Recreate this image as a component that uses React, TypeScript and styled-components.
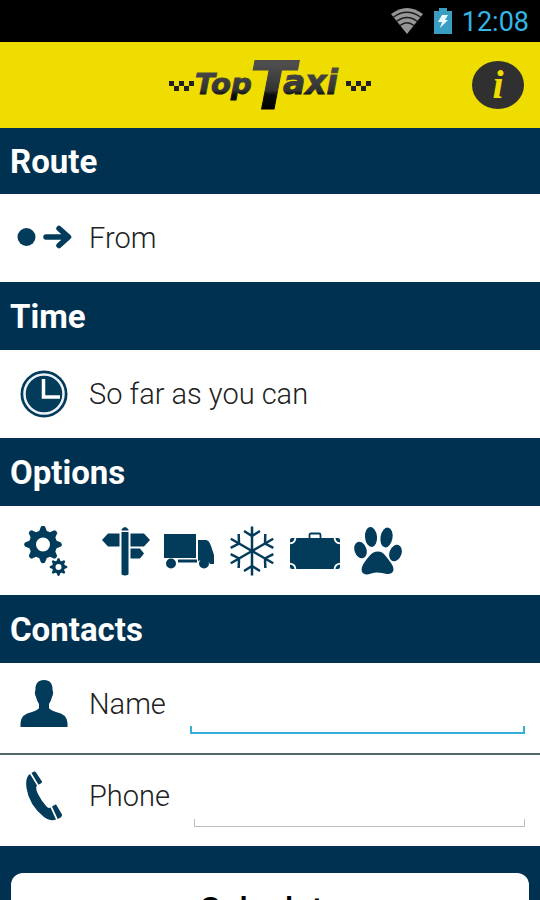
import React from "react";
import styled, { createGlobalStyle } from "styled-components";

const navy = "#013150";
const ink = "#033b5b";
const yellow = "#efdd00";
const holo = "#33b5e5";

const GlobalStyle = createGlobalStyle`
  *, *::before, *::after { box-sizing: border-box; }
  body { margin: 0; background: ${navy}; font-family: Roboto, "Noto Sans", sans-serif; }
`;

const Screen = styled.div`
  display: flex;
  flex-direction: column;
  height: 100vh;
  background: ${navy};
`;

const StatusBar = styled.div`
  flex: none;
  display: flex;
  align-items: center;
  justify-content: flex-end;
  gap: 10px;
  height: 42px;
  padding: 0 11px 0 0;
  background: #000;
`;

const Clock = styled.time`
  color: ${holo};
  font-size: 27px;
  line-height: 32px;
  margin-top: 2px;
`;

const TitleBar = styled.header`
  flex: none;
  display: grid;
  grid-template-columns: 1fr auto 1fr;
  align-items: center;
  height: 86px;
  padding: 0 16px;
  background: ${yellow};
`;

const Brand = styled.h1`
  grid-column: 2;
  margin: 0;
  line-height: 0;
`;

const InfoButton = styled.button`
  justify-self: end;
  display: flex;
  align-items: center;
  justify-content: center;
  width: 52px;
  height: 48px;
  padding: 0;
  border: 0;
  border-radius: 50%;
  background: #303030;
  color: ${yellow};
  font: italic bold 40px/44px "Liberation Serif", serif;
`;

const Content = styled.main`
  flex: 1;
  min-height: 0;
  overflow-y: auto;
  scrollbar-width: none;
`;

const SectionTitle = styled.h2`
  display: flex;
  align-items: center;
  height: 68px;
  margin: 0;
  padding: 2px 10px 0;
  background: ${navy};
  color: #fff;
  font-size: 33px;
  font-weight: 700;
  line-height: 40px;
  &:first-child {
    height: 66px;
  }
`;

const Row = styled.div`
  display: flex;
  align-items: center;
  height: 89px;
  padding: 0 15px;
  background: #fff;
`;

const RowButton = styled.button`
  display: flex;
  align-items: center;
  width: 100%;
  height: 88px;
  padding: 0 15px;
  border: 0;
  background: #fff;
  text-align: left;
`;

const FieldRow = styled(Row)`
  height: 90px;
  padding-bottom: 9px;
  & + & {
    height: 93px;
    border-top: 2px solid #56666f;
  }
`;

const IconSlot = styled.span`
  flex: none;
  display: flex;
  justify-content: center;
  width: 58px;
  margin-right: 16px;
`;

const rowText = `
  color: #222;
  font: 300 29px/36px Roboto, "Noto Sans", sans-serif;
`;

const RowText = styled.span`
  ${rowText}
`;

const FieldLabel = styled.label`
  ${rowText}
  flex: none;
`;

const Field = styled.input<{ $line: string; $weight: number }>`
  flex: 1;
  min-width: 0;
  height: 56px;
  margin: 0 0 10px 24px;
  padding: 8px 10px;
  border: 0;
  outline: 0;
  align-self: flex-end;
  color: #222;
  font: 300 29px/36px Roboto, sans-serif;
  background:
    linear-gradient(${p => p.$line}, ${p => p.$line}) left bottom / 100% ${p => p.$weight}px no-repeat,
    linear-gradient(${p => p.$line}, ${p => p.$line}) left bottom / ${p => p.$weight}px 8px no-repeat,
    linear-gradient(${p => p.$line}, ${p => p.$line}) right bottom / ${p => p.$weight}px 8px no-repeat;
`;

const OptionButton = styled.button`
  flex: none;
  display: flex;
  justify-content: center;
  width: 63px;
  padding: 0;
  border: 0;
  background: none;
`;

const OptionList = styled.div`
  display: flex;
  align-items: center;
  margin-left: 16px;
`;

const Footer = styled.div`
  display: flex;
  padding: 27px 11px;
  background: ${navy};
`;

const CalculateButton = styled.button`
  flex: 1;
  height: 72px;
  border: 0;
  border-radius: 12px;
  background: #fff;
  color: #000;
  font: 500 34px/40px Roboto, "Noto Sans", sans-serif;
`;

const WifiIcon = () => (
  <svg width="34" height="28" viewBox="0 0 34 28" aria-hidden="true">
    <path d="M1 7Q17-5 33 7L17 27Z" fill="#969696" />
    <path d="M3 10.500Q17 0 31 10.500M6.500 14.500Q17 6.500 27.500 14.500M10 18.500Q17 13 24 18.500" fill="none" stroke="#1c1c1c" strokeWidth="1.500" />
  </svg>
);

const BatteryIcon = () => (
  <svg width="18" height="28" viewBox="0 0 18 28" aria-hidden="true">
    <path d="M5 1h8v3h5v23H0V4h5z" fill="#3a9dc2" />
    <path d="M8 8h6l-3 5h3L6 21l2-6H4z" fill="#e9fbff" />
  </svg>
);

const Checks = ({ x }: { x: number }) => (
  <path
    transform={`translate(${x} 26)`}
    d="M0 0h5v5H0zM10 0h5v5h-5zM20 0h5v5h-5zM5 5h5v5H5zM15 5h5v5h-5z"
    fill="#222"
  />
);

const Logo = () => (
  <svg width="204" height="60" viewBox="0 0 204 60" role="img" aria-label="TopTaxi">
    <defs>
      <linearGradient id="metal" x1="0" y1="10" x2="0" y2="56" gradientUnits="userSpaceOnUse">
        <stop offset="0" stopColor="#4d4d4d" />
        <stop offset=".55" stopColor="#333" />
        <stop offset=".65" stopColor="#0c0c0c" />
        <stop offset="1" stopColor="#000" />
      </linearGradient>
    </defs>
    <Checks x={1} />
    <g
      fill="url(#metal)"
      stroke="url(#metal)"
      strokeWidth="1"
      fontFamily="DejaVu Sans, sans-serif"
      fontWeight="700"
      fontStyle="italic"
    >
      <text x="27" y="39" fontSize="29">Top</text>
      <text x="82" y="54" fontSize="66">T</text>
      <text x="115" y="39" fontSize="33">axi</text>
    </g>
    <Checks x={178} />
  </svg>
);

const FromIcon = () => (
  <svg width="56" height="26" viewBox="0 0 56 26" aria-hidden="true">
    <circle cx="10.500" cy="12" r="9" fill={ink} />
    <path d="M30 12h22M43 3.500l9.500 8.500-9.500 8.500" fill="none" stroke={ink} strokeWidth="5.500" strokeLinecap="round" strokeLinejoin="round" />
  </svg>
);

const ClockIcon = () => (
  <svg width="48" height="48" viewBox="0 0 48 48" aria-hidden="true">
    <circle cx="24" cy="24" r="23.500" fill={ink} />
    <circle cx="24" cy="24" r="19.500" fill="none" stroke="#eef3fa" strokeWidth="2.500" />
    <path d="M23.500 9v18H40" fill="none" stroke="#fff" strokeWidth="3.500" />
  </svg>
);

const Gear = ({ cx, cy, r, hole, tooth }: { cx: number; cy: number; r: number; hole: number; tooth: number }) => (
  <g transform={`translate(${cx} ${cy})`}>
    <circle r={(r + hole) / 2} fill="none" stroke={ink} strokeWidth={r - hole} />
    {[0, 45, 90, 135, 180, 225, 270, 315].map(a => (
      <path
        key={a}
        transform={`rotate(${a})`}
        d={`M${-tooth} ${-r + 1}L${-tooth / 2} ${-r - tooth}Q0 ${-r - tooth * 1.4} ${tooth / 2} ${-r - tooth}L${tooth} ${-r + 1}Z`}
        fill={ink}
      />
    ))}
  </g>
);

const GearsIcon = () => (
  <svg width="46" height="50" viewBox="0 0 46 50" aria-hidden="true">
    <Gear cx={19} cy={18.5} r={14} hole={7} tooth={4} />
    <Gear cx={34.5} cy={41} r={6.5} hole={3} tooth={2} />
  </svg>
);

const SignpostIcon = () => (
  <svg width="50" height="50" viewBox="0 0 50 50" fill={ink} aria-hidden="true">
    <path d="M20.500 3.500q3.500-5 7 0v1h-7zM20.500 6h7v42.500q-3.500 2-7 0zM7 7.500h11.500v13H7L1 14zM29.500 7.500H43l6 6.500-6 6.500H29.500zM29.500 22.500h9.500l4 5-4 5h-9.500z" />
  </svg>
);

const TruckIcon = () => (
  <svg width="50" height="36" viewBox="0 0 50 36" fill={ink} aria-hidden="true">
    <path d="M0 1h32v24H0zM34 7h8q3 0 5 6l3 9v9h-4q-3-5-9-4l-3 1zM14 26.500h19v3H14z" />
    <circle cx="7" cy="30.500" r="5" />
    <circle cx="40" cy="30.500" r="5" />
  </svg>
);

const SnowIcon = () => (
  <svg width="48" height="50" viewBox="-24 -25 48 50" fill="none" stroke={ink} strokeWidth="2.500" aria-hidden="true">
    {[0, 60, 120, 180, 240, 300].map(a => (
      <path key={a} transform={`rotate(${a})`} d="M0 0V-24.500M-8-20L0-15 8-20" />
    ))}
  </svg>
);

const CaseIcon = () => (
  <svg width="50" height="38" viewBox="0 0 50 38" aria-hidden="true">
    <path d="M19.500 6V3q0-1.500 1.500-1.500h8q1.500 0 1.500 1.500v3" fill="none" stroke={ink} strokeWidth="1.800" />
    <rect x="0" y="6" width="50" height="31" rx="2" fill={ink} />
    <path d="M5.500 5q0 6.500-6.500 6.500M44.500 5q0 6.500 6.500 6.500M5.500 38q0-6.500-6.500-6.500M44.500 38q0-6.500 6.500-6.500" fill="none" stroke="#fff" strokeWidth="1.800" />
  </svg>
);

const PawIcon = () => (
  <svg width="48" height="50" viewBox="0 0 48 50" fill={ink} aria-hidden="true">
    <ellipse cx="17" cy="11" rx="6" ry="10" transform="rotate(-6 17 11)" />
    <ellipse cx="32.500" cy="11.500" rx="6" ry="10" transform="rotate(10 32.500 11.500)" />
    <ellipse cx="6.500" cy="24" rx="6" ry="8.500" transform="rotate(-18 6.500 24)" />
    <ellipse cx="41.500" cy="27" rx="6" ry="8.500" transform="rotate(20 41.500 27)" />
    <path d="M24 25.500C30 25.500 33 32 37 37C42 44 39 48.500 33 48C29 47.500 27 46.500 23 46.500C19 46.500 17 48 13 48.500C7 48.500 6 43 10 37C14 32 17 25.500 24 25.500Z" />
  </svg>
);

const PersonIcon = () => (
  <svg width="48" height="48" viewBox="0 0 48 48" fill={ink} aria-hidden="true">
    <path d="M24 0C30 0 33 4 32.500 10Q34 13 32 17Q31 21 29 24V28Q30 30 36 32Q47 34 47.500 43V47H.500V43Q1 34 12 32Q18 30 19 28V24Q17 21 16 17Q14 13 15.500 10C15 4 18 0 24 0Z" />
  </svg>
);

const PhoneIcon = () => (
  <svg width="38" height="50" viewBox="0 0 38 50" fill={ink} aria-hidden="true">
    <path d="M5 3L12 14.500Q10 17 13 23Q17 31 22 36Q24 37.500 25.500 36.500L31 48.500Q26 51 19 46Q4 34 1.500 17Q0 6 5 3Z" />
    <path d="M6.500 2L9 .500Q10 0 11 1.500L17 10.500Q17.500 12 13.500 13.700ZM27 35.500L30 33.700Q31 33.300 32 35L37 43.500Q37.500 46 32.700 48Z" />
  </svg>
);

const options = [
  { name: "Route stops", Icon: SignpostIcon },
  { name: "Cargo", Icon: TruckIcon },
  { name: "Air conditioning", Icon: SnowIcon },
  { name: "Luggage", Icon: CaseIcon },
  { name: "Pets", Icon: PawIcon },
];

export default function App() {
  return (
    <Screen>
      <GlobalStyle />
      <StatusBar>
        <WifiIcon />
        <BatteryIcon />
        <Clock>12:08</Clock>
      </StatusBar>
      <TitleBar>
        <Brand><Logo /></Brand>
        <InfoButton type="button">i</InfoButton>
      </TitleBar>
      <Content>
        <SectionTitle>Route</SectionTitle>
        <RowButton type="button">
          <IconSlot><FromIcon /></IconSlot>
          <RowText>From</RowText>
        </RowButton>
        <SectionTitle>Time</SectionTitle>
        <RowButton type="button">
          <IconSlot><ClockIcon /></IconSlot>
          <RowText>So far as you can</RowText>
        </RowButton>
        <SectionTitle>Options</SectionTitle>
        <Row>
          <OptionButton type="button" aria-label="All options"><GearsIcon /></OptionButton>
          <OptionList>
            {options.map(({ name, Icon }) => (
              <OptionButton key={name} type="button" aria-label={name}><Icon /></OptionButton>
            ))}
          </OptionList>
        </Row>
        <SectionTitle>Contacts</SectionTitle>
        <FieldRow>
          <IconSlot><PersonIcon /></IconSlot>
          <FieldLabel htmlFor="name">Name</FieldLabel>
          <Field id="name" type="text" $line="#35aedb" $weight={2} />
        </FieldRow>
        <FieldRow>
          <IconSlot><PhoneIcon /></IconSlot>
          <FieldLabel htmlFor="phone">Phone</FieldLabel>
          <Field id="phone" type="tel" $line="#bdbdbd" $weight={1} />
        </FieldRow>
        <Footer>
          <CalculateButton type="button">Calculate</CalculateButton>
        </Footer>
      </Content>
    </Screen>
  );
}
